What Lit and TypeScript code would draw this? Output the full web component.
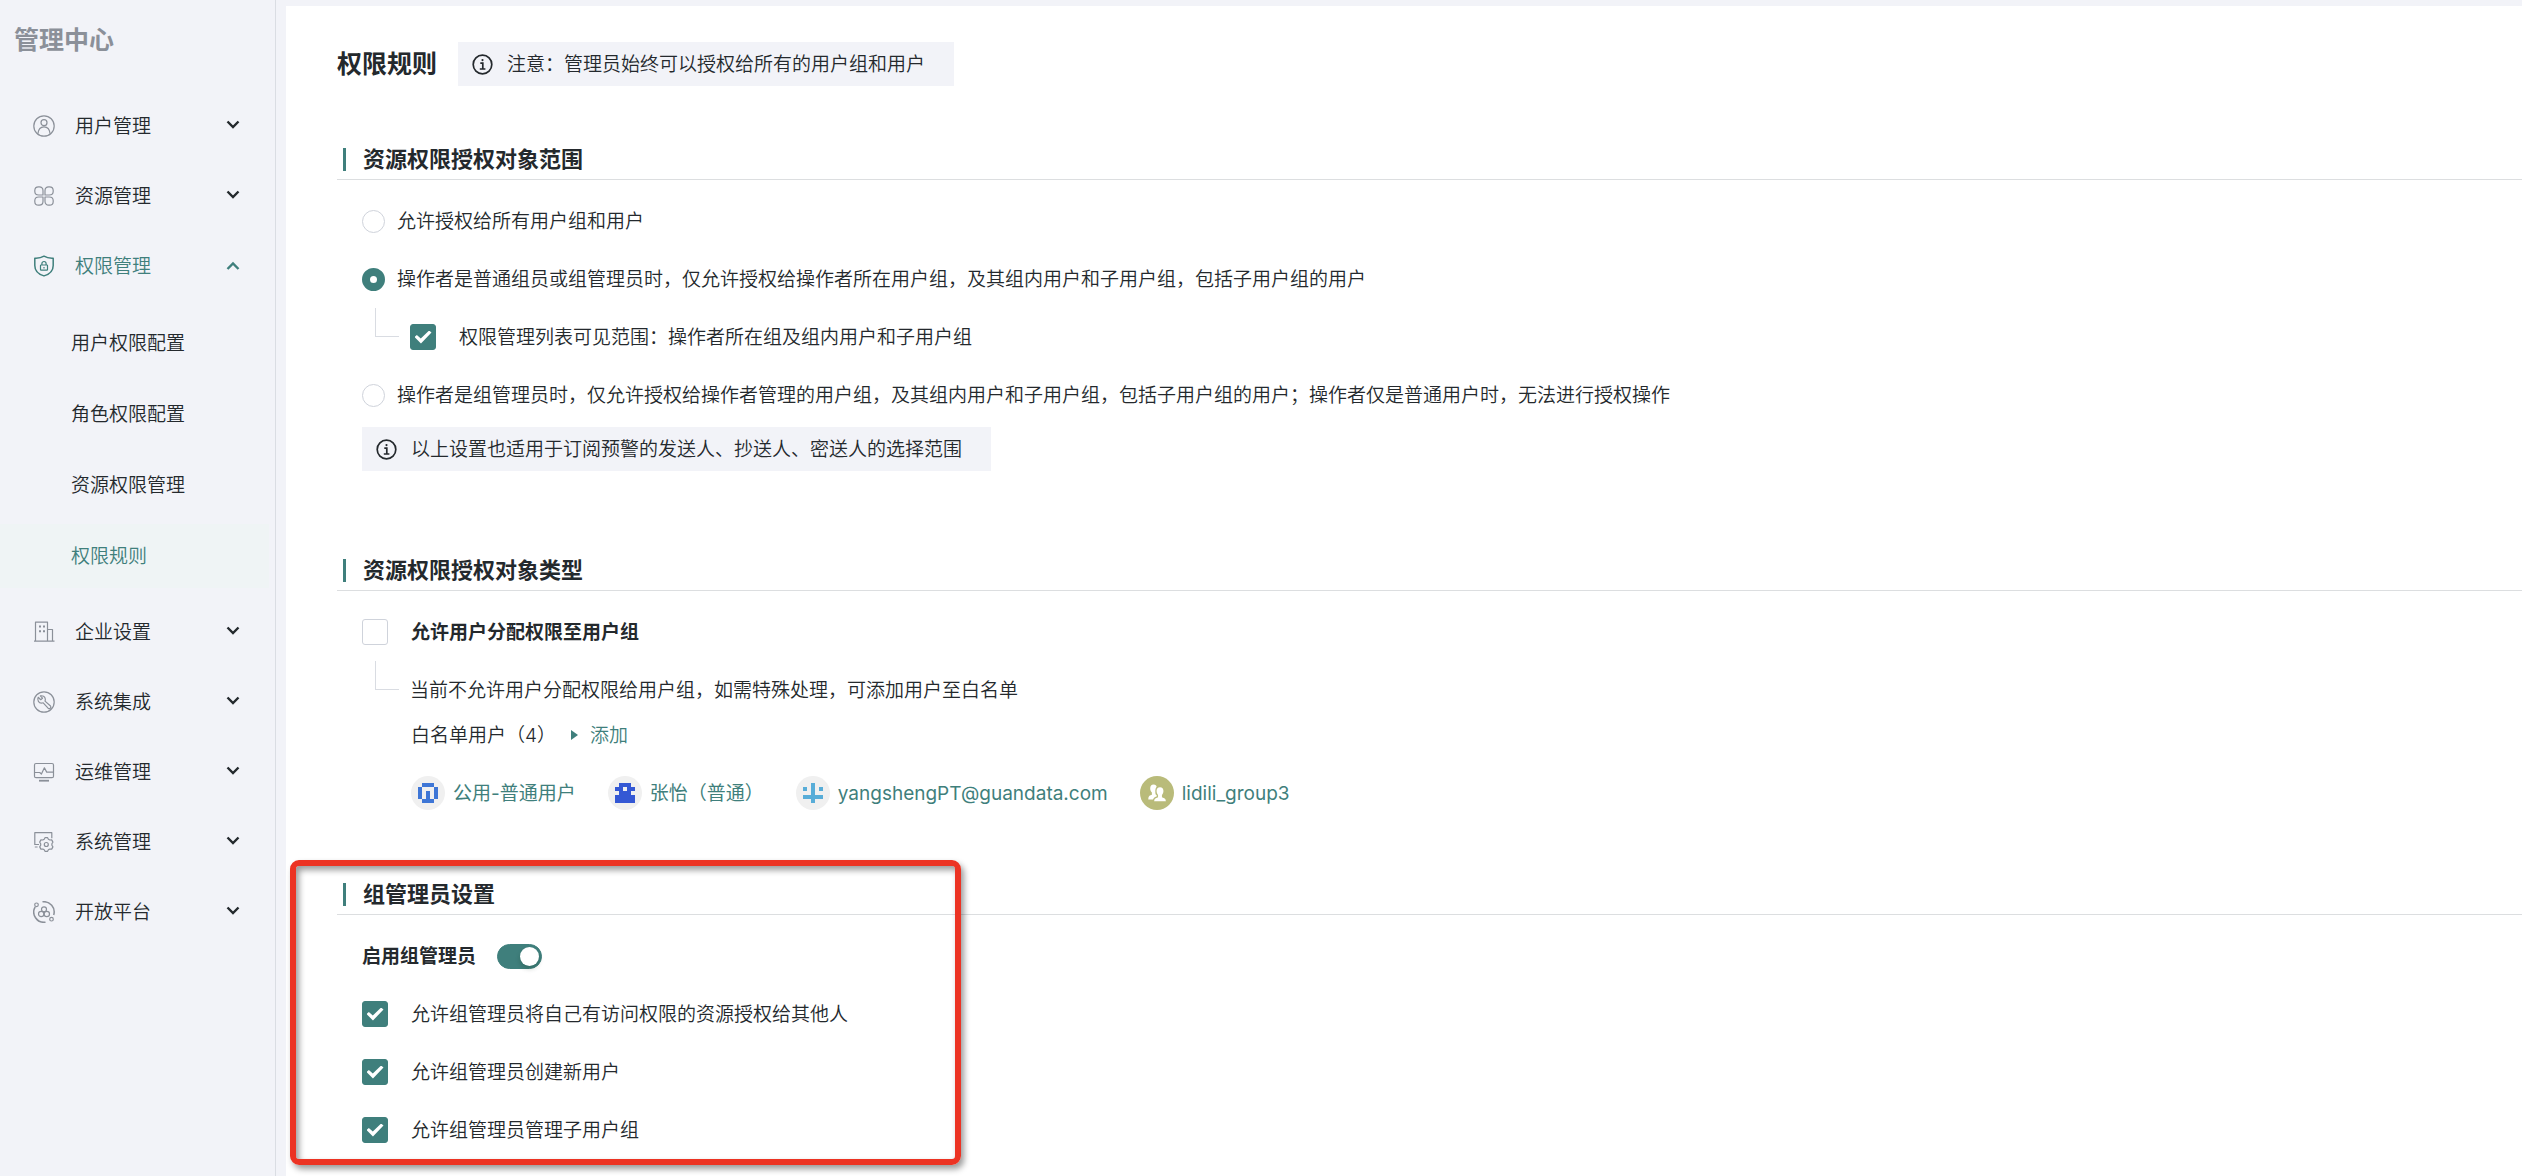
import { LitElement, html, css, svg, nothing, TemplateResult } from "lit";
import { customElement, property, state } from "lit/decorators.js";
import { classMap } from "lit/directives/class-map.js";

type IconName = "user" | "grid" | "shield" | "building" | "wrench" | "monitor" | "gear" | "platform";

const ICONS: Record<IconName, TemplateResult> = {
  user: svg`<circle cx="11" cy="11" r="10.2"/><circle cx="11" cy="7.7" r="3"/><path d="M4.9 18.6c.5-4.400 2.900-6.800 6.100-6.800s5.600 2.400 6.100 6.800"/>`,
  grid: svg`<path d="M10 10H5.700C3.300 10 1.800 8.500 1.800 6.200V5.600C1.800 3.300 3.300 1.800 5.600 1.800H6.200C8.500 1.800 10 3.300 10 5.700ZM12 10h4.300c2.400 0 3.900-1.500 3.900-3.800v-.6c0-2.300-1.500-3.800-3.800-3.800h-.6C13.500 1.800 12 3.300 12 5.700ZM10 12H5.700c-2.400 0-3.900 1.500-3.900 3.800v.6c0 2.300 1.500 3.800 3.800 3.800h.6c2.300 0 3.800-1.500 3.800-3.900ZM12 12h4.300c2.400 0 3.900 1.500 3.900 3.800v.6c0 2.300-1.500 3.800-3.800 3.800h-.6c-2.300 0-3.800-1.500-3.800-3.900Z"/>`,
  shield: svg`<path stroke-width="1.500" d="M11 1.200c2.600 1.600 5.600 2.200 9.200 2v7.300c0 5-3 8.600-9.200 10.400C4.800 19.100 1.800 15.500 1.800 10.500V3.200c3.600.2 6.600-.4 9.200-2Z"/><rect x="7.500" y="10" width="7" height="5.200" rx=".6"/><path d="M8.900 10V8.600a2.100 2.100 0 0 1 4.200 0V10M11 12v1.500"/>`,
  building: svg`<path d="M2.500 20V1.200h12V20M14.500 8.500h5V20M1 20.200h20.500"/><path stroke-width="2" d="M6 5.500h2M10 5.500h2M6 10.300h2M10 10.300h2"/>`,
  wrench: svg`<circle cx="11" cy="11" r="10.200"/><path d="M5.200 6.300 7.700 8.700 9.500 7.200 7.300 4.900C9.700 4.300 12 5.600 12.300 8c.1.800 0 1.500-.3 2.100l5.500 4.900c1.200 1.700-.9 3.500-2.400 2.200l-4.900-5.400c-1.800.7-3.800.2-4.800-1.400-.8-1.300-.8-2.800-.2-4.100Z"/>`,
  monitor: svg`<rect x="1.500" y="2.500" width="19" height="14.200" rx="1.500"/><path d="M2 11.500h4.800l1.600 1.600 3-6.300 2.300 4.300h6.500"/><path stroke-width="1.800" d="M6 19.700h10"/>`,
  gear: svg`<path d="M6 13.500H1.800V1.700h17v5.500M1.200 13.500h3.500M1.800 16h2.800"/><circle cx="13.300" cy="13.500" r="2"/><path d="m11.200 8.200.8-1.500h2.600l.8 1.500 1.400.8 1.900-.1 1.200 2.200-1 1.600v1.600l1 1.600-1.200 2.200-1.900-.1-1.400.8-.8 1.500H12l-.8-1.500-1.400-.8-1.900.1-1.200-2.200 1-1.600v-1.600l-1-1.600 1.200-2.200 1.900.1Z"/>`,
  platform: svg`<path stroke-width="1.500" d="M9.500.8A10.300 10.300 0 0 1 20.700 14M12.500 21.200A10.300 10.300 0 0 1 2.200 5.800"/><circle cx="3.500" cy="3.800" r="1.800"/><circle cx="18.500" cy="18.200" r="1.800"/><circle cx="11" cy="8.300" r="2.500"/><circle cx="8.200" cy="13" r="2.700"/><circle cx="13.800" cy="13" r="2.700"/>`,
};

/* Single-line text whose glyphs sit on the optical centre of a 26px row. */
const textStyles = css`
  .text { padding-top: 2px; line-height: 24px; }
`;

interface NavGroup {
  icon: IconName;
  label: string;
  children?: string[];
}

const NAV: NavGroup[] = [
  { icon: "user", label: "用户管理" },
  { icon: "grid", label: "资源管理" },
  { icon: "shield", label: "权限管理", children: ["用户权限配置", "角色权限配置", "资源权限管理", "权限规则"] },
  { icon: "building", label: "企业设置" },
  { icon: "wrench", label: "系统集成" },
  { icon: "monitor", label: "运维管理" },
  { icon: "gear", label: "系统管理" },
  { icon: "platform", label: "开放平台" },
];

@customElement("side-nav")
class SideNav extends LitElement {
  @state() private open = "权限管理";
  private current = "权限规则";

  static styles = [textStyles, css`
    :host { display: block; box-sizing: border-box; width: 276px; flex: none; border-right: 1px solid #dadde3; }
    .title { margin: 0; padding: 24px 14px 0; font-size: 25px; line-height: 32px; font-weight: 700; color: #8b9099; }
    nav { padding-top: 38px; }
    .group { display: flex; align-items: center; gap: 20px; width: 100%; height: 64px; margin-bottom: 6px; padding: 0 35px 0 33px; border: 0; background: none; font: inherit; color: inherit; text-align: left; cursor: pointer; }
    .group .text { flex: 1; }
    .icon { width: 22px; height: 22px; fill: none; stroke: #8b9099; stroke-width: 1.2; stroke-linejoin: round; }
    .chevron { width: 14px; height: 14px; margin-top: -4px; fill: none; stroke: currentColor; stroke-width: 2.4; }
    .open { color: #3f7f7c; }
    .open .icon { stroke: #3f7f7c; }
    .open .chevron { margin-top: 0; }
    .sub { display: grid; gap: 7px; margin: 13px 6px 12px 0; padding: 0; list-style: none; }
    .link { display: flex; align-items: center; height: 64px; padding-left: 71px; color: inherit; text-decoration: none; }
    .current { background: #eff4f5; color: #3f7f7c; }
  `];

  render() {
    return html`
      <h1 class="title">管理中心</h1>
      <nav aria-label="管理中心">
        ${NAV.map((g) => {
          const open = this.open === g.label && !!g.children;
          return html`
            <button class=${classMap({ group: true, open })} type="button" aria-expanded=${open}
              @click=${() => (this.open = open ? "" : g.label)}>
              <svg class="icon" viewBox="0 0 22 22" aria-hidden="true">${ICONS[g.icon]}</svg>
              <span class="text">${g.label}</span>
              <svg class="chevron" viewBox="0 0 14 14" aria-hidden="true">
                <path d=${open ? "M1.500 10 7 4.500 12.500 10" : "M1.500 4.500 7 10 12.500 4.500"} />
              </svg>
            </button>
            ${open
              ? html`<ul class="sub">
                  ${g.children!.map((c) => html`<li><a href="#" class=${classMap({ link: true, current: c === this.current })}><span class="text">${c}</span></a></li>`)}
                </ul>`
              : nothing}
          `;
        })}
      </nav>
    `;
  }
}

@customElement("info-note")
class InfoNote extends LitElement {
  static styles = [textStyles, css`
    :host { display: inline-flex; align-items: center; gap: 14px; height: 44px; padding: 0 29px 0 14px; background: #f2f3f8; }
    svg { width: 21px; height: 21px; fill: none; stroke: currentColor; stroke-width: 1.7; }
  `];
  render() {
    return html`
      <svg viewBox="0 0 21 21" aria-hidden="true">
        <circle cx="10.500" cy="10.500" r="9.300" />
        <path d="M8.300 9.200h2.500v5.600M7.800 15h5.600" />
        <circle cx="10.500" cy="6.100" r="1.100" fill="currentColor" stroke="none" />
      </svg>
      <span class="text"><slot></slot></span>
    `;
  }
}

@customElement("rule-section")
class RuleSection extends LitElement {
  @property() heading = "";
  static styles = css`
    :host { display: block; }
    .head { display: flex; align-items: center; gap: 17px; margin: 0; padding: 0 0 4px 6px; border-bottom: 1px solid #dcdee0; font-size: 22px; line-height: 32px; font-weight: 700; }
    .head::before { content: ""; width: 3px; height: 23px; background: #3f7f7c; }
    .body { display: flex; flex-direction: column; align-items: flex-start; padding: 28px 0 0 25px; }
  `;
  render() {
    return html`
      <h3 class="head">${this.heading}</h3>
      <div class="body"><slot></slot></div>
    `;
  }
}

interface Member {
  name: string;
  color: string;
  rows?: string[];
}

/* Each identicon is a five by five grid; "#" is a filled cell. */
const MEMBERS: Member[] = [
  { name: "公用-普通用户", color: "#3e76d6", rows: [".###.", "#...#", "#.#.#", "#.#.#", ".###."] },
  { name: "张怡（普通）", color: "#3458d4", rows: [".###.", "##.##", ".###.", "#####", "#####"] },
  { name: "yangshengPT@guandata.com", color: "#58add8", rows: ["..#..", "#.#.#", "..#..", "#####", "..#.."] },
  { name: "lidili_group3", color: "#b9bb7a" },
];

@customElement("member-link")
class MemberLink extends LitElement {
  @property({ attribute: false }) member!: Member;
  static styles = [textStyles, css`
    a { display: flex; align-items: center; gap: 8px; color: #3f7f7c; font-weight: 400; text-decoration: none; }
    svg { width: 34px; height: 34px; }
  `];
  render() {
    const { name, color, rows } = this.member;
    return html`
      <a href="#">
        <svg viewBox="0 0 34 34" aria-hidden="true">
          ${rows
            ? svg`<circle cx="17" cy="17" r="17" fill="#f0f0f0"/>
                <g fill=${color} shape-rendering="crispEdges">
                  ${rows.flatMap((row, y) =>
                    [...row].map((c, x) => (c === "#" ? svg`<rect x=${7 + x * 4} y=${7 + y * 4} width="4" height="4"/>` : nothing))
                  )}
                </g>`
            : svg`<circle cx="17" cy="17" r="17" fill=${color}/>
                <path fill="#fff" d="M13.500 8.500c2.200 0 3.500 1.500 3.500 3.700 0 1.800-.5 3-1.300 3.900v2.300l2 1-3 4H8.300c0-2.400.6-3.500 2.200-4.100l1.400-.6v-2.200c-1-.9-1.700-2.300-1.700-4 0-2.400 1.200-4 3.300-4Z"/>
                <path fill="#fff" stroke=${color} stroke-width="1.300" d="M20 10.500c2.700 0 4.100 1.900 4.100 4.500 0 1.900-.6 3.300-1.500 4.200v1.700l2 .8c1.500.6 2 1.900 2 4.200H13.400c0-2.300.5-3.600 2-4.200l2-.8v-1.700c-.9-.9-1.500-2.300-1.500-4.200 0-2.600 1.400-4.500 4.100-4.500Z"/>`}
        </svg>
        <span class="text">${name}</span>
      </a>
    `;
  }
}

@customElement("app-root")
class AppRoot extends LitElement {
  @state() private scope = 1;

  static styles = [textStyles, css`
    :host {
      display: flex;
      min-height: 100vh;
      background: #f2f3f8;
      color: #24292d;
      font-family: Inter, "Noto Sans CJK SC", sans-serif;
      font-size: 19px;
      line-height: 26px;
      font-weight: 350;
    }
    main { flex: 1; min-width: 0; margin: 6px 0 0 10px; padding: 36px 0 24px 51px; background: #fff; }
    .top { display: flex; align-items: center; gap: 21px; margin-bottom: 57px; }
    .title { margin: 0; font-size: 25px; line-height: 32px; font-weight: 700; }
    .scope { padding-bottom: 83px; }
    .types { padding-bottom: 68px; }
    .row { display: flex; align-items: center; gap: 12px; min-height: 26px; margin-bottom: 32px; }
    .check { gap: 23px; }
    .nested { gap: 11px; padding-left: 13px; }
    .last { margin-bottom: 19px; }
    .toggle { gap: 21px; }
    .strong { font-weight: 700; }
    .branch { box-sizing: border-box; flex: none; align-self: flex-start; width: 24px; height: 29px; margin-top: -16px; border: solid #d9dce2; border-width: 0 0 1px 1px; }
    label { display: flex; align-items: center; }
    input { appearance: none; flex: none; box-sizing: border-box; margin: 0; border: 1px solid #cfd3db; background: #fff; cursor: pointer; }
    input:checked { border-color: #3f7f7c; background: #3f7f7c; }
    .radio { width: 23px; height: 23px; border-radius: 50%; }
    .radio:checked { border-width: 8px; background: #fff; }
    .box { display: grid; place-items: center; width: 26px; height: 26px; border-radius: 3px; }
    .box:checked::before { content: ""; width: 17px; height: 13px; background: #fff; clip-path: polygon(0 50%, 14% 34%, 37% 62%, 86% 0, 100% 16%, 38% 100%); }
    .switch { display: flex; align-items: center; width: 45px; height: 25px; padding: 0 2px; border-radius: 13px; }
    .switch::before { content: ""; width: 19px; height: 19px; border-radius: 50%; background: #fff; box-shadow: 0 3px 5px rgba(0, 35, 11, 0.2); }
    .switch:checked { justify-content: flex-end; }
    .list { display: flex; align-items: center; margin: -13px 0 0 49px; }
    .add { display: flex; align-items: center; gap: 12px; margin-left: 15px; color: #3f7f7c; text-decoration: none; }
    .add::before { content: ""; border: solid transparent; border-width: 5px 0 5px 7px; border-left-color: #3f7f7c; }
    .members { display: flex; gap: 32px; margin: 28px 0 0 49px; }
    .admin { position: relative; }
    .frame { position: absolute; top: -18px; left: -47px; box-sizing: border-box; width: 671px; height: 305px; border: 6px solid #ec3323; border-radius: 9px; box-shadow: 3px 4px 6px rgba(0, 0, 0, 0.4), inset 3px 4px 6px rgba(0, 0, 0, 0.4); pointer-events: none; }
  `];

  private radio(index: number, text: string, last = false) {
    return html`
      <label class=${classMap({ row: true, last })}>
        <input class="radio" type="radio" name="scope" .checked=${this.scope === index} @change=${() => (this.scope = index)} />
        <span class="text">${text}</span>
      </label>
    `;
  }

  render() {
    return html`
      <side-nav></side-nav>
      <main lang="zh-CN">
        <div class="top">
          <h2 class="title">权限规则</h2>
          <info-note>注意：管理员始终可以授权给所有的用户组和用户</info-note>
        </div>

        <rule-section class="scope" heading="资源权限授权对象范围">
          ${this.radio(0, "允许授权给所有用户组和用户")}
          ${this.radio(1, "操作者是普通组员或组管理员时，仅允许授权给操作者所在用户组，及其组内用户和子用户组，包括子用户组的用户")}
          <div class="row nested">
            <span class="branch"></span>
            <label class="check">
              <input class="box" type="checkbox" checked />
              <span class="text">权限管理列表可见范围：操作者所在组及组内用户和子用户组</span>
            </label>
          </div>
          ${this.radio(2, "操作者是组管理员时，仅允许授权给操作者管理的用户组，及其组内用户和子用户组，包括子用户组的用户；操作者仅是普通用户时，无法进行授权操作", true)}
          <info-note>以上设置也适用于订阅预警的发送人、抄送人、密送人的选择范围</info-note>
        </rule-section>

        <rule-section class="types" heading="资源权限授权对象类型">
          <label class="row check strong">
            <input class="box" type="checkbox" />
            <span class="text">允许用户分配权限至用户组</span>
          </label>
          <div class="row nested">
            <span class="branch"></span>
            <span class="text">当前不允许用户分配权限给用户组，如需特殊处理，可添加用户至白名单</span>
          </div>
          <div class="list">
            <span class="text">白名单用户（4）</span>
            <a class="add" href="#"><span class="text">添加</span></a>
          </div>
          <div class="members">${MEMBERS.map((m) => html`<member-link .member=${m}></member-link>`)}</div>
        </rule-section>

        <rule-section class="admin" heading="组管理员设置">
          <label class="row toggle strong">
            <span class="text">启用组管理员</span>
            <input class="switch" type="checkbox" role="switch" checked />
          </label>
          <label class="row check">
            <input class="box" type="checkbox" checked />
            <span class="text">允许组管理员将自己有访问权限的资源授权给其他人</span>
          </label>
          <label class="row check">
            <input class="box" type="checkbox" checked />
            <span class="text">允许组管理员创建新用户</span>
          </label>
          <label class="check">
            <input class="box" type="checkbox" checked />
            <span class="text">允许组管理员管理子用户组</span>
          </label>
          <div class="frame"></div>
        </rule-section>
      </main>
    `;
  }
}
